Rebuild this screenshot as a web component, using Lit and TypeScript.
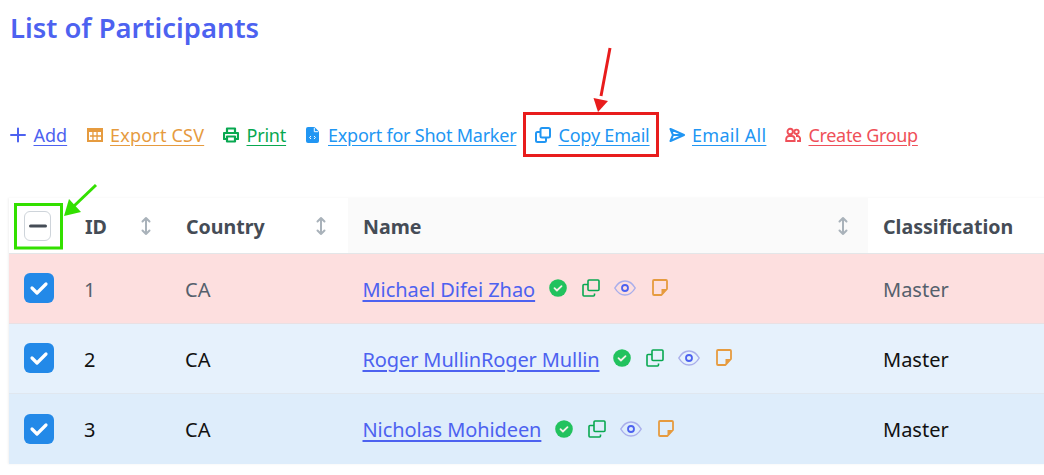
import { LitElement, html, css, svg } from "lit";
import { customElement } from "lit/decorators.js";

const sortIcon = html`<svg class="sort" width="12" height="20" viewBox="0 0 12 20" fill="none" stroke="#a9b2ba" stroke-width="2" stroke-linecap="round" stroke-linejoin="round"><path d="M6 2v16M2.500 5.500 6 2l3.500 3.500M2.500 14.500 6 18l3.500-3.500"/></svg>`;

const tools = [
  { label: "Add", w: 34, ls: 0, cls: "indigo", icon: svg`<path d="M8 1.500v13M1 8h14" fill="none" stroke="currentColor" stroke-width="2" stroke-linecap="round"/>` },
  { label: "Export CSV", w: 94, ls: 0.2, cls: "orange", icon: svg`<path fill-rule="evenodd" fill="currentColor" d="M0 1h16v14H0zM2 5v8h3.300V9.800H2.900V8.200h2.400V5zM6.600 5v3.200h2.800V5zM10.700 5v3.200h3.300V5zM6.600 9.800V13h2.800V9.800zM10.700 9.800V13h3.300V9.800z"/>` },
  { label: "Print", w: 39, ls: -0.2, cls: "green", icon: svg`<g fill="none" stroke="currentColor" stroke-width="2.200" stroke-linejoin="round"><path d="M4 6V1.500h8V6"/><path d="M4 12H1V6h14v6h-3"/><path d="M4 9.500h8v5H4z"/></g>` },
  { label: "Export for Shot Marker", w: 188, ls: -0.23, cls: "blue", icon: svg`<path fill="currentColor" d="M3 0h6.500L14 4.500V14a2 2 0 0 1-2 2H3a2 2 0 0 1-2-2V2a2 2 0 0 1 2-2z"/><path d="M9.300 .8V4.700H13.200" fill="none" stroke="#fff" stroke-width="1"/><path d="M6 9 4.600 10.500 6 12M9 9l1.400 1.500L9 12" fill="none" stroke="#fff" stroke-width="1"/>` },
  { label: "Copy Email", w: 91, ls: -0.2, cls: "blue", icon: svg`<g fill="none" stroke="currentColor" stroke-width="2" stroke-linejoin="round"><rect x="5.500" y="1" width="9.500" height="9.500" rx="1.500"/><path d="M5 5H2.500A1.500 1.500 0 0 0 1 6.500v7A1.500 1.500 0 0 0 2.500 15h7a1.500 1.500 0 0 0 1.500-1.500V11"/></g>` },
  { label: "Email All", w: 74, ls: 0.3, cls: "blue", icon: svg`<path d="M1.500 2 15 8 1.500 14 4 8zM4 8h10" fill="none" stroke="currentColor" stroke-width="2" stroke-linejoin="round"/>` },
  { label: "Create Group", w: 108, ls: -0.33, cls: "red", icon: svg`<g fill="none" stroke="currentColor" stroke-width="1.900"><circle cx="5.200" cy="4.500" r="2.700"/><circle cx="11.500" cy="4.800" r="2.200"/><path d="M1.200 14v-2a3 3 0 0 1 3-3h2.400a3 3 0 0 1 3 3v2zM11 9h1.300a2.800 2.800 0 0 1 2.800 2.800V14h-3"/></g>` },
];

const rows = [
  { id: 1, name: "Michael Difei Zhao", cls: "pink", ls: -0.05 },
  { id: 2, name: "Roger MullinRoger Mullin", cls: "light", ls: -0.12 },
  { id: 3, name: "Nicholas Mohideen", cls: "mid", ls: -0.1 },
];

@customElement("app-root")
export class AppRoot extends LitElement {
  static styles = css`
    :host { display: block; position: relative; width: 1044px; height: 475px; overflow: hidden; background: #fff; font-family: "Noto Sans", sans-serif; }
    h1 { margin: 0; padding: 10px 0 0 10px; height: 46px; box-sizing: border-box; font: 600 27.4px/36px "Noto Sans", sans-serif; color: #4d62f0; }
    .toolbar { display: flex; align-items: center; gap: 19px; padding: 0 0 0 10px; margin-top: 74px; height: 30px; font: 400 18px/30px "Noto Sans", sans-serif; white-space: nowrap; }
    .tool { display: flex; align-items: center; gap: 7.500px; }
    .tool u { display: inline-block; text-underline-offset: 3px; }
    .indigo { color: #4d62f0; } .orange { color: #e69b3f; } .green { color: #08a850; } .blue { color: #2196f3; } .red { color: #ef5059; }
    .table { margin: 48px 0 0 9px; width: 1100px; box-shadow: -1px 0 2px rgba(0,0,0,.06); }
    .row { display: grid; grid-template-columns: 61px 101px 177px 520px 241px; align-items: center; }
    .head { height: 56px; font-weight: 700; font-size: 19.600px; color: #454c56; border-bottom: 1px solid #e3e6e8; box-sizing: border-box; }
    .cell { padding-left: 15px; display: flex; align-items: center; height: 100%; box-sizing: border-box; }
    .head .cell { justify-content: space-between; padding-right: 19px; padding-top: 2px; }
    .head .country { padding-right: 21px; }
    .head .namecol { background: #fafafa; }
    .sort { margin-top: -2px; }
    .data { height: 70px; font-size: 20px; border-bottom: 1px solid rgba(220,225,230,.6); box-sizing: border-box; color: #111; }
    .data.last { border-bottom: none; }
    .data .cell { padding-top: 1px; }
    .data .tight { padding-left: 14px; }
    .data .name { padding-left: 14.500px; }
    .pink { background: #fddfdf; color: #55606c; }
    .light { background: #e6f1fc; }
    .mid { background: #deedfb; }
    .box { width: 30px; height: 30px; margin-top: -1px; border-radius: 6px; box-sizing: border-box; display: flex; align-items: center; justify-content: center; }
    .box.off { border: 1px solid #ced4da; background: #fff; }
    .box.on { background: #2389e8; margin-top: -2px; }
    .name a { color: #4d62f0; text-decoration: underline; text-underline-offset: 3px; }
    .actions { display: flex; align-items: flex-start; margin-left: 14px; height: 18px; margin-top: -2px; }
    .check { margin-right: 15px; }
    .copy { margin-right: 14px; }
    .eye { margin-right: 16px; margin-top: 1px; }
    .overlay { position: absolute; left: 0; top: 0; pointer-events: none; }
  `;

  render() {
    return html`
      <h1>List of Participants</h1>
      <div class="toolbar">
        ${tools.map(t => html`<span class="tool ${t.cls}"><svg width="16" height="16" viewBox="0 0 16 16">${t.icon}</svg><u style="width:${t.w}px;letter-spacing:${t.ls}px">${t.label}</u></span>`)}
      </div>
      <div class="table">
        <div class="row head">
          <div class="cell"><div class="box off"><svg width="20" height="4"><rect x="1" y="0.500" width="18" height="3" rx="1.500" fill="#454c56"/></svg></div></div>
          <div class="cell">ID ${sortIcon}</div>
          <div class="cell country">Country ${sortIcon}</div>
          <div class="cell namecol">Name ${sortIcon}</div>
          <div class="cell">Classification</div>
        </div>
        ${rows.map((r, i) => html`
          <div class="row data ${r.cls} ${i === 2 ? "last" : ""}">
            <div class="cell"><div class="box on"><svg width="20" height="16" viewBox="0 0 20 16"><path d="M3 8l5 5 9-9" fill="none" stroke="#fff" stroke-width="3.200" stroke-linecap="round" stroke-linejoin="round"/></svg></div></div>
            <div class="cell tight">${r.id}</div>
            <div class="cell tight">CA</div>
            <div class="cell name"><a style="letter-spacing:${r.ls}px">${r.name}</a>
              <span class="actions">
                <svg class="check" width="18" height="18" viewBox="0 0 18 18"><circle cx="9" cy="9" r="8.800" fill="#22c25e"/><path d="M5.500 9.200l2.400 2.300 4.600-4.400" fill="none" stroke="#f4f0e8" stroke-width="1.800" stroke-linecap="round" stroke-linejoin="round"/></svg>
                <svg class="copy" width="18" height="18" viewBox="0 0 18 18" fill="none" stroke="#08a850" stroke-width="1.600"><rect x="6" y="1" width="11" height="10.500" rx="1"/><path d="M6 5.500H2a1 1 0 0 0-1 1V16a1 1 0 0 0 1 1h9.500a1 1 0 0 0 1-1v-1.500"/></svg>
                <svg class="eye" width="22" height="16" viewBox="0 0 22 16" fill="none"><path d="M.8 8C3.500 3.300 7 1 11 1s7.500 2.300 10.200 7C18.500 12.700 15 15 11 15S3.500 12.700.8 8z" stroke="#a9aeeb" stroke-width="1.500"/><circle cx="11" cy="8" r="3" stroke="#4d62f0" stroke-width="1.800"/></svg>
                <svg width="16" height="17" viewBox="0 0 16 17" fill="none"><path d="M15 10V2a1 1 0 0 0-1-1H2a1 1 0 0 0-1 1v13a1 1 0 0 0 1 1h7.500z" stroke="#e69b3f" stroke-width="1.800" stroke-linejoin="round"/><path d="M9.500 16v-6H15z" fill="#e69b3f"/></svg>
              </span>
            </div>
            <div class="cell">Master</div>
          </div>`)}
      </div>
      <svg class="overlay" width="1044" height="475" fill="none">
        <rect x="524.500" y="113.500" width="133" height="42" stroke="#e81c1c" stroke-width="3"/>
        <path d="M610 48 601 96" stroke="#e81c1c" stroke-width="3"/>
        <path d="M593.500 98 608 101 598 112z" fill="#e81c1c"/>
        <rect x="15.500" y="204.500" width="46" height="43.500" stroke="#33e000" stroke-width="3"/>
        <path d="M96 185 74 206" stroke="#33e000" stroke-width="3"/>
        <path d="M69 199 81 212 64 216z" fill="#33e000"/>
      </svg>
    `;
  }
}
